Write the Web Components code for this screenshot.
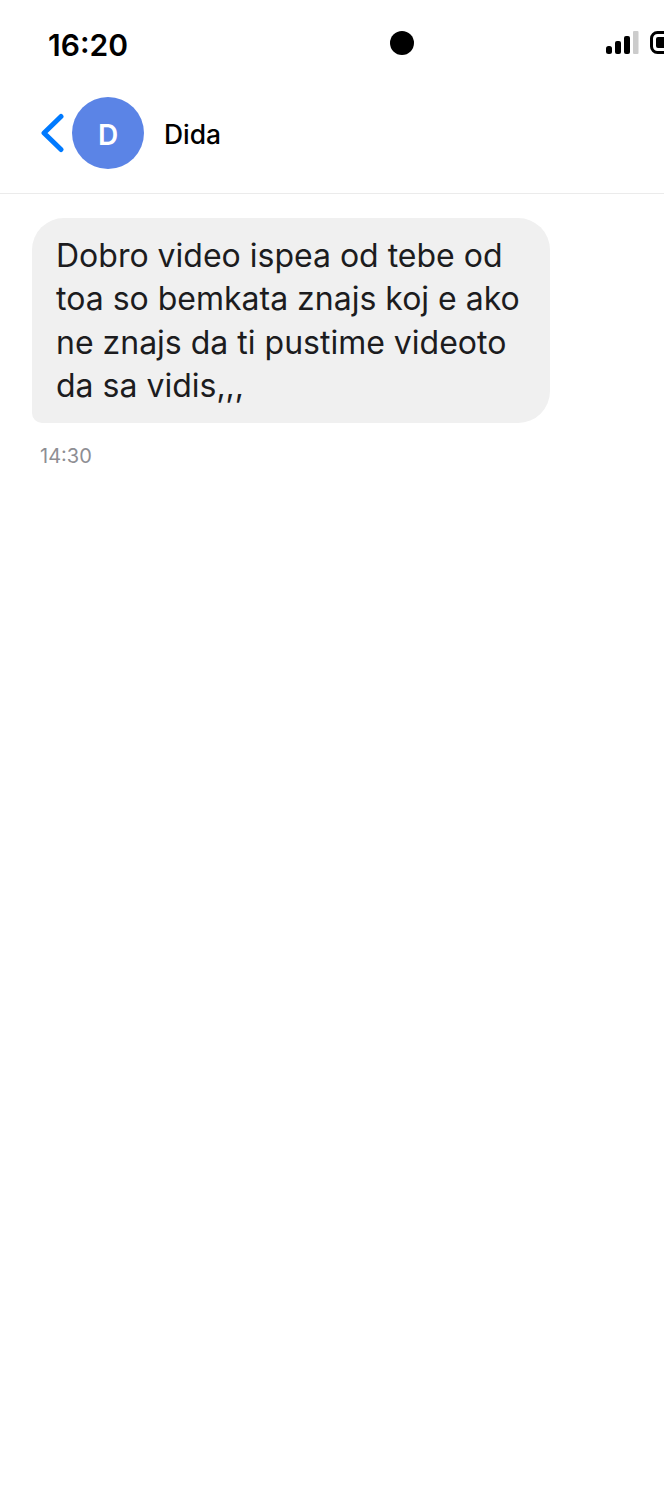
<!DOCTYPE html>
<html>
<head>
<meta charset="utf-8">
<style>
html, body { margin: 0; padding: 0; background: #fff; }
body { width: 664px; height: 1504px; overflow: hidden; font-family: Inter, "Noto Sans", sans-serif; }
</style>
</head>
<body>
<chat-screen>
  <status-bar time="16:20"></status-bar>
  <chat-header name="Dida"></chat-header>
  <chat-message time="14:30">Dobro video ispea od tebe od toa so bemkata znajs koj e ako ne znajs da ti pustime videoto da sa vidis,,,</chat-message>
</chat-screen>
<script>
class ChatScreen extends HTMLElement {
  connectedCallback() {
    this.attachShadow({ mode: "open" }).innerHTML = `
      <style>
        :host { display: flex; flex-direction: column; width: 664px; height: 1504px; overflow: hidden; background: #fff; }
      </style>
      <slot></slot>`;
  }
}

class StatusBar extends HTMLElement {
  connectedCallback() {
    this.attachShadow({ mode: "open" }).innerHTML = `
      <style>
        :host { display: block; height: 85px; }
        .bar { display: grid; grid-template-columns: 342px 24px 1fr; height: 85px; padding-left: 48px; box-sizing: border-box; width: 664px; }
        .time { font: 600 30px/36px Inter, sans-serif; color: #000; padding-top: 27px; }
        .camera { width: 24px; height: 24px; margin-top: 30.5px; border-radius: 50%; background: #000; }
        .icons { display: flex; justify-content: flex-end; gap: 11px; padding-top: 30px; height: 26px; overflow: hidden; }
        svg { display: block; flex: none; }
        .battery { margin-right: -16px; }
      </style>
      <div class="bar">
        <div class="time">${this.getAttribute("time")}</div>
        <div class="camera"></div>
        <div class="icons">
          <svg width="33" height="24" viewBox="0 0 33 24">
            <rect x="0" y="16" width="6" height="8" rx="2.5" fill="#000"/>
            <rect x="9" y="11" width="6" height="13" rx="2" fill="#000"/>
            <rect x="18" y="6" width="6" height="18" rx="2" fill="#000"/>
            <rect x="27" y="1" width="5.5" height="23" rx="1" fill="#ccc"/>
          </svg>
          <svg class="battery" width="30" height="26" viewBox="0 0 30 26">
            <rect x="1.5" y="2.5" width="26" height="20" rx="6" fill="none" stroke="#000" stroke-width="3"/>
            <rect x="6" y="7" width="17" height="11" rx="2" fill="#000"/>
          </svg>
        </div>
      </div>`;
  }
}

class ChatHeader extends HTMLElement {
  connectedCallback() {
    const name = this.getAttribute("name");
    this.attachShadow({ mode: "open" }).innerHTML = `
      <style>
        :host { display: block; }
        .header { display: flex; align-items: center; height: 96px; border-bottom: 1px solid #ebebeb; padding: 0 0 12px 40px; box-sizing: content-box; }
        .back { display: block; flex: none; margin-right: 8px; }
        .avatar { width: 72px; height: 72px; box-sizing: border-box; padding-top: 3px; border-radius: 50%; background: #5b84e6; color: #fff; display: flex; align-items: center; justify-content: center; font: 600 28px Inter, sans-serif; margin-right: 20px; }
        .name { font: 500 26.4px/32px Inter, sans-serif; color: #000; padding-top: 2px; }
      </style>
      <div class="header">
        <svg class="back" width="24" height="40" viewBox="0 0 24 40">
          <path d="M21 3.5 L4 20 L21 36.5" fill="none" stroke="#007aff" stroke-width="5" stroke-linecap="round" stroke-linejoin="round"/>
        </svg>
        <div class="avatar">${name[0]}</div>
        <div class="name">${name}</div>
      </div>`;
  }
}

class ChatMessage extends HTMLElement {
  connectedCallback() {
    this.attachShadow({ mode: "open" }).innerHTML = `
      <style>
        :host { display: block; padding: 24px 32px 0; }
        .bubble { width: 518px; box-sizing: border-box; padding: 16px 24px 16px; background: #f0f0f0; border-radius: 32px 32px 32px 10px; font: 400 32px/43.33px Inter, sans-serif; color: #1c1c1e; }
        .time { margin: 21px 0 0 8px; font: 400 20px/24px Inter, sans-serif; color: #8e8e93; }
      </style>
      <div class="bubble"><slot></slot></div>
      <div class="time">${this.getAttribute("time")}</div>`;
  }
}

customElements.define("chat-screen", ChatScreen);
customElements.define("status-bar", StatusBar);
customElements.define("chat-header", ChatHeader);
customElements.define("chat-message", ChatMessage);
</script>
</body>
</html>
